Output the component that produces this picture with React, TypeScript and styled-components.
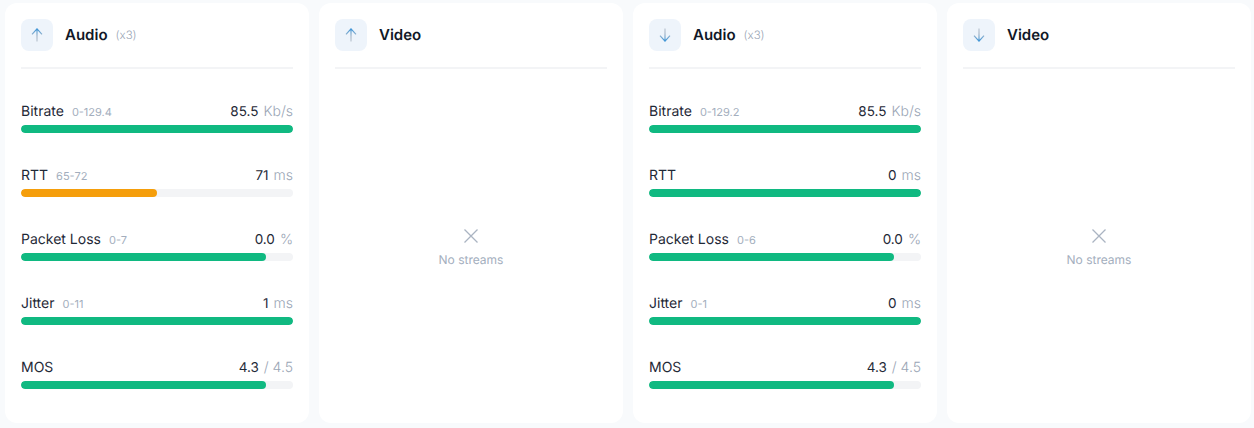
import styled, { createGlobalStyle } from 'styled-components';

const GlobalStyle = createGlobalStyle`
  html, body {
    margin: 0;
    padding: 0;
    background: #f8fafc;
    font-family: Inter, "Liberation Sans", sans-serif;
    text-rendering: geometricPrecision;
  }
`;

const Board = styled.div`
  display: grid;
  grid-template-columns: repeat(4, 304px);
  gap: 10px;
  padding: 3px 3px 5px 5px;
`;

const Card = styled.section`
  display: flex;
  flex-direction: column;
  box-sizing: border-box;
  height: 420px;
  padding: 16px;
  background: #fff;
  border-radius: 12px;
`;

const CardHeader = styled.header`
  display: flex;
  align-items: center;
  height: 48px;
  box-sizing: content-box;
  margin-bottom: 32px;
  border-bottom: 2px solid #f3f4f6;
`;

const IconBox = styled.div`
  display: flex;
  align-items: center;
  justify-content: center;
  width: 32px;
  height: 32px;
  margin-bottom: 16px;
  border-radius: 8px;
  background: #eef4fb;
`;

const Title = styled.h3`
  margin: 0 0 16px 12px;
  font-size: 15px;
  line-height: 32px;
  font-weight: 600;
  color: #111827;
`;

const Count = styled.span`
  margin: 0 0 16px 8px;
  font-size: 11.5px;
  font-weight: 300;
  line-height: 32px;
  color: #9aa5b5;
`;

const Metrics = styled.div`
  display: flex;
  flex-direction: column;
  gap: 32px;
`;

const Metric = styled.div`
  display: flex;
  flex-direction: column;
  gap: 4px;
`;

const MetricRow = styled.div`
  display: flex;
  justify-content: space-between;
  align-items: baseline;
  box-sizing: border-box;
  height: 20px;
  padding-top: 1px;
  line-height: 20px;
  font-size: 14px;
  color: #1f2937;
`;

const Range = styled.span`
  margin-left: 8px;
  font-size: 11px;
  color: #a3aebd;
`;

const Value = styled.span`
  display: flex;
  align-items: baseline;
  gap: 5px;
  font-size: 13.5px;
`;

const Unit = styled.span`
  font-size: 14px;
  font-weight: 300;
  color: #9aa5b5;
`;

const Track = styled.div`
  height: 8px;
  border-radius: 4px;
  background: #f3f4f6;
  overflow: hidden;
`;

const Fill = styled.div<{ $color: string; $width: number }>`
  height: 100%;
  width: ${(p) => p.$width}%;
  border-radius: 4px;
  background: ${(p) => p.$color};
`;

const Empty = styled.div`
  flex: 1;
  display: flex;
  flex-direction: column;
  align-items: center;
  justify-content: center;
  gap: 6px;
  padding-bottom: 16px;
  color: #a3aebd;
  font-size: 12px;
`;

const GREEN = '#10b981';
const AMBER = '#f59e0b';

type MetricData = {
  label: string;
  range?: string;
  value: string;
  unit: string;
  width: number;
  color?: string;
};

const Arrow = ({ down, id }: { down?: boolean; id: string }) => (
  <svg width="16" height="16" viewBox="0 0 16 16" fill="none">
    <defs>
      <linearGradient id={id} x1="8" y1={down ? 15 : 1} x2="8" y2={down ? 1 : 15} gradientUnits="userSpaceOnUse">
        <stop offset="0" stopColor="#2f8fd8" />
        <stop offset="0.3" stopColor="#6ea6d2" />
        <stop offset="0.6" stopColor="#aab8c8" />
        <stop offset="1" stopColor="#bcc6d2" />
      </linearGradient>
    </defs>
    <path
      d={down ? 'M8 1.5V14M3 8.6L8 14.2L13 8.6' : 'M8 14.5V2M3 7.4L8 1.8L13 7.4'}
      stroke={`url(#${id})`}
      strokeWidth="1.2"
    />
  </svg>
);

const Cross = () => (
  <svg width="20" height="20" viewBox="0 0 20 20" fill="none">
    <path d="M3.5 3.5L16.5 16.5M16.5 3.5L3.5 16.5" stroke="#aab4c2" strokeWidth="1.3" />
  </svg>
);

const upAudio: MetricData[] = [
  { label: 'Bitrate', range: '0-129.4', value: '85.5', unit: 'Kb/s', width: 100 },
  { label: 'RTT', range: '65-72', value: '71', unit: 'ms', width: 50, color: AMBER },
  { label: 'Packet Loss', range: '0-7', value: '0.0', unit: '%', width: 90 },
  { label: 'Jitter', range: '0-11', value: '1', unit: 'ms', width: 100 },
  { label: 'MOS', value: '4.3', unit: '/ 4.5', width: 90 },
];

const downAudio: MetricData[] = [
  { label: 'Bitrate', range: '0-129.2', value: '85.5', unit: 'Kb/s', width: 100 },
  { label: 'RTT', value: '0', unit: 'ms', width: 100 },
  { label: 'Packet Loss', range: '0-6', value: '0.0', unit: '%', width: 90 },
  { label: 'Jitter', range: '0-1', value: '0', unit: 'ms', width: 100 },
  { label: 'MOS', value: '4.3', unit: '/ 4.5', width: 90 },
];

const StreamCard = ({ id, down, title, count, metrics }: {
  id: string;
  down?: boolean;
  title: string;
  count?: string;
  metrics?: MetricData[];
}) => (
  <Card>
    <CardHeader>
      <IconBox>
        <Arrow id={id} down={down} />
      </IconBox>
      <Title>{title}</Title>
      {count && <Count>{count}</Count>}
    </CardHeader>
    {metrics ? (
      <Metrics>
        {metrics.map((m) => (
          <Metric key={m.label}>
            <MetricRow>
              <span>
                {m.label}
                {m.range && <Range>{m.range}</Range>}
              </span>
              <Value>
                {m.value}
                <Unit>{m.unit}</Unit>
              </Value>
            </MetricRow>
            <Track>
              <Fill $color={m.color ?? GREEN} $width={m.width} />
            </Track>
          </Metric>
        ))}
      </Metrics>
    ) : (
      <Empty>
        <Cross />
        No streams
      </Empty>
    )}
  </Card>
);

const App = () => (
  <>
    <GlobalStyle />
    <Board>
      <StreamCard id="a1" title="Audio" count="(x3)" metrics={upAudio} />
      <StreamCard id="a2" title="Video" />
      <StreamCard id="a3" down title="Audio" count="(x3)" metrics={downAudio} />
      <StreamCard id="a4" down title="Video" />
    </Board>
  </>
);

export default App;
